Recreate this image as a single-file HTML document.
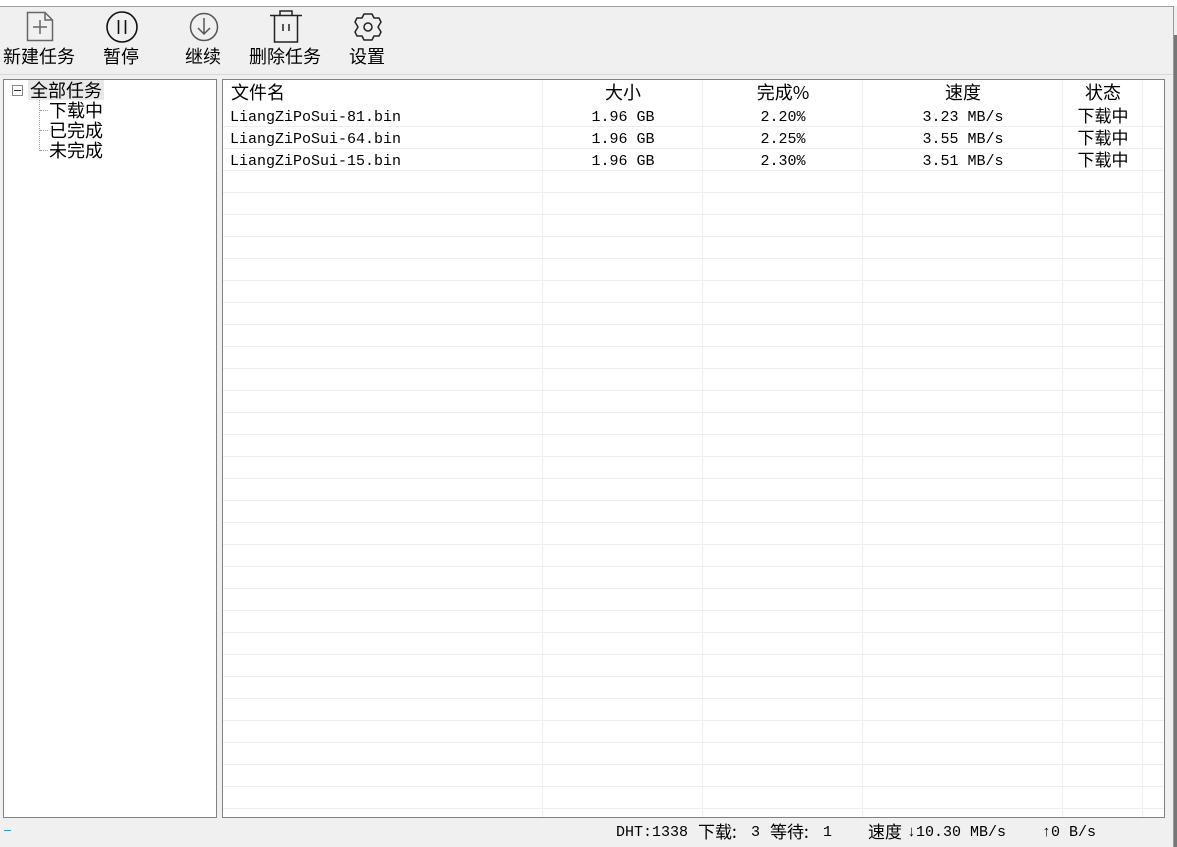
<!DOCTYPE html><html><head><meta charset="utf-8"><style>
*{margin:0;padding:0;box-sizing:border-box}
body{width:1177px;height:847px;background:#f0f0f0;position:relative;overflow:hidden;font-family:"Liberation Sans","Noto Sans CJK SC",sans-serif;color:#000}
.a{position:absolute}
.cj{font-family:"Noto Sans CJK SC","WenQuanYi Zen Hei",sans-serif}
.mono{font-family:"Liberation Mono","Noto Sans CJK SC",monospace;font-size:15px}
.lbl{font-size:18px;line-height:20px;top:46px;white-space:nowrap}
.row{position:absolute;left:0;width:943px;height:22px;border-bottom:1px solid #eeeeee}
.c{position:absolute;top:2px;height:22px;line-height:22px;white-space:nowrap}
.cs{position:absolute;top:0;width:80px;left:840px;text-align:center;font-size:17px;line-height:22px;white-space:nowrap}
.vl{position:absolute;top:0;bottom:0;width:1px;background:#efefef}
</style></head><body>
<div class="a" style="left:0;top:0;width:1177px;height:6px;background:#fff"></div>
<div class="a" style="left:0;top:6px;width:1174px;height:1px;background:#a0a0a0"></div>
<div class="a" style="left:1173px;top:6px;width:1px;height:841px;background:#999"></div>
<div class="a" style="left:1174px;top:35px;width:3px;height:812px;background:#777"></div>
<div class="a" style="left:0;top:74px;width:1173px;height:1px;background:#d8d8d8"></div>
<svg class="a" style="left:0;top:0" width="420" height="45" fill="none">
<path d="M27.5 12.5H45L52.5 20V40.5H27.5Z M45 12.5V20H52.5" stroke="#666" stroke-width="1.5"/>
<path d="M40 20V34M33 27H47" stroke="#666" stroke-width="1.5"/>
<circle cx="122" cy="27" r="15" stroke="#111" stroke-width="1.6"/>
<path d="M118.5 20V34M125.5 20V34" stroke="#111" stroke-width="1.6"/>
<circle cx="204" cy="27" r="13.5" stroke="#555" stroke-width="1.5"/>
<path d="M204 18V34M198 28L204 34L210 28" stroke="#555" stroke-width="1.5"/>
<path d="M270 15.5H302M280 15.5V11H292V15.5M274.5 16V42H297.5V16M283 24V31M289 24V31" stroke="#222" stroke-width="1.5"/>
<path d="M364 14L372 14L374 18L379 18L381 22L378 27L381 32L379 36L374 36L372 40L364 40L362 36L357 36L355 32L358 27L355 22L357 18L362 18Z" stroke="#222" stroke-width="1.5" stroke-linejoin="round"/>
<circle cx="368" cy="27" r="4" stroke="#222" stroke-width="1.5"/>
</svg>
<div class="a lbl cj" style="left:3px">新建任务</div>
<div class="a lbl cj" style="left:103px">暂停</div>
<div class="a lbl cj" style="left:185px">继续</div>
<div class="a lbl cj" style="left:249px">删除任务</div>
<div class="a lbl cj" style="left:349px">设置</div>
<div class="a" style="left:3px;top:79px;width:214px;height:739px;background:#fff;border:1px solid #828282">
<div class="a" style="left:8px;top:5px;width:11px;height:11px;border:1px solid #888;background:#fff"></div>
<div class="a" style="left:10px;top:10px;width:7px;height:1px;background:#333"></div>
<div class="a" style="left:35px;top:17px;width:0;height:54px;border-left:1px dotted #999"></div>
<div class="a" style="left:36px;top:30px;width:8px;border-top:1px dotted #999"></div>
<div class="a" style="left:36px;top:50px;width:8px;border-top:1px dotted #999"></div>
<div class="a" style="left:36px;top:70px;width:8px;border-top:1px dotted #999"></div>
<div class="a cj" style="left:24px;top:0px;font-size:18px;line-height:20px;background:#e8e8e8;padding:0 2px">全部任务</div>
<div class="a cj" style="left:45px;top:20px;font-size:18px;line-height:20px">下载中</div>
<div class="a cj" style="left:45px;top:40px;font-size:18px;line-height:20px">已完成</div>
<div class="a cj" style="left:45px;top:60px;font-size:18px;line-height:20px">未完成</div>
</div>
<div class="a" style="left:222px;top:79px;width:943px;height:739px;background:#fff;border:1px solid #828282;overflow:hidden">
<div class="vl" style="left:319px"></div><div class="vl" style="left:479px"></div><div class="vl" style="left:639px"></div><div class="vl" style="left:839px"></div><div class="vl" style="left:919px"></div>
<div class="row cj" style="top:0;height:25px;font-size:18px;border-bottom:none"><div class="c" style="left:8px;top:0;line-height:25px;height:25px">文件名</div><div class="c" style="left:320px;top:0;width:160px;text-align:center;line-height:25px">大小</div><div class="c" style="left:480px;top:0;width:160px;text-align:center;line-height:25px">完成%</div><div class="c" style="left:640px;top:0;width:200px;text-align:center;line-height:25px">速度</div><div class="c" style="left:840px;top:0;width:80px;text-align:center;line-height:25px">状态</div></div>
<div class="row mono" style="top:25px"><div class="c" style="left:7px">LiangZiPoSui-81.bin</div><div class="c" style="left:320px;width:160px;text-align:center">1.96 GB</div><div class="c" style="left:480px;width:160px;text-align:center">2.20%</div><div class="c" style="left:640px;width:200px;text-align:center">3.23 MB/s</div><div class="cs cj" style="top:-1px">下载中</div></div>
<div class="row mono" style="top:47px"><div class="c" style="left:7px">LiangZiPoSui-64.bin</div><div class="c" style="left:320px;width:160px;text-align:center">1.96 GB</div><div class="c" style="left:480px;width:160px;text-align:center">2.25%</div><div class="c" style="left:640px;width:200px;text-align:center">3.55 MB/s</div><div class="cs cj" style="top:-1px">下载中</div></div>
<div class="row mono" style="top:69px"><div class="c" style="left:7px">LiangZiPoSui-15.bin</div><div class="c" style="left:320px;width:160px;text-align:center">1.96 GB</div><div class="c" style="left:480px;width:160px;text-align:center">2.30%</div><div class="c" style="left:640px;width:200px;text-align:center">3.51 MB/s</div><div class="cs cj" style="top:-1px">下载中</div></div>
<div class="a" style="left:0;top:91px;width:943px;height:650px;background:repeating-linear-gradient(to bottom,transparent 0,transparent 21px,#eeeeee 21px,#eeeeee 22px)"></div>
</div>
<div class="a" style="left:4px;top:830px;width:7px;height:1px;background:#3a8fd0"></div>
<div class="a mono" style="left:616px;top:823px;line-height:20px;white-space:nowrap">DHT:1338</div>
<div class="a cj" style="left:698px;top:821px;font-size:17px;line-height:20px">下载:</div>
<div class="a mono" style="left:751px;top:823px;line-height:20px">3</div>
<div class="a cj" style="left:770px;top:821px;font-size:17px;line-height:20px">等待:</div>
<div class="a mono" style="left:823px;top:823px;line-height:20px">1</div>
<div class="a cj" style="left:868px;top:821px;font-size:17px;line-height:20px">速度</div>
<div class="a mono" style="left:907px;top:823px;line-height:20px;white-space:nowrap">↓10.30 MB/s</div>
<div class="a mono" style="left:1042px;top:823px;line-height:20px;white-space:nowrap">↑0 B/s</div>
</body></html>
